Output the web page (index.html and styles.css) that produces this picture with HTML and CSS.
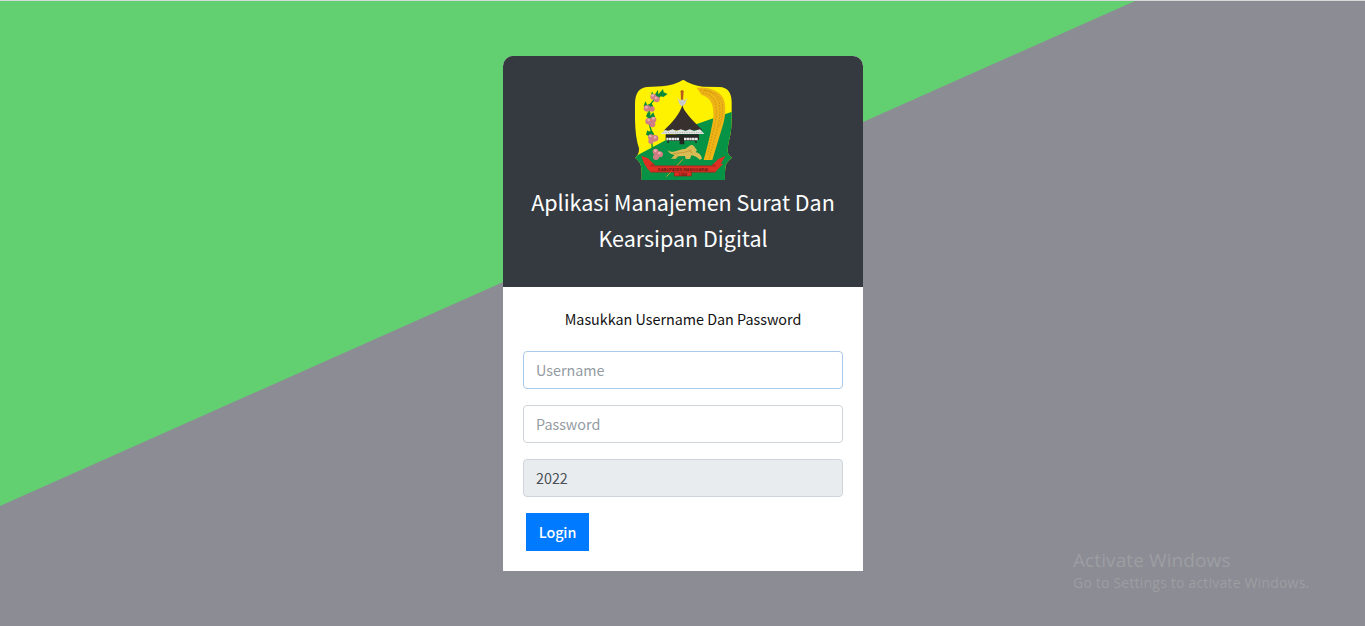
FILE: index.html
```html
<!DOCTYPE html>
<html lang="id">
<head>
<meta charset="utf-8">
<title>Login</title>
<link rel="stylesheet" href="styles.css">
</head>
<body class="login-page">
<main class="card">
  <header class="card-header">
    <svg class="logo" viewBox="30 30 300 300" aria-hidden="true">
      <defs><clipPath id="shield"><path d="M181 29Q204 46 240 50L290 51Q325 53 326 95V128Q327 172 321 200Q314 226 314 243Q315 257 327 263Q317 270 311 280Q305 290 306 330H56Q57 290 51 280Q46 270 36 263Q49 252 48 235Q37 203 36 150V100Q37 54 72 51L117 49Q155 46 181 29Z"/></clipPath></defs>
      <g clip-path="url(#shield)">
        <path fill="#fff200" d="M30 25H330V335H30Z"/>
        <path fill="#079345" d="M30 263L215 164L330 124V335H30Z"/>
      </g>
      <g fill="none" stroke="#078b3b" stroke-width="4"><path d="M125 71Q88 82 80 112Q73 149 84 180L88 237M81 127L76 151M89 190L77 185"/></g>
      <g fill="#078b3b"><path d="M84 76L87 64L93 77L105 59L106 73L120 57L122 67L134 72L121 81L113 79L107 86ZM62 108L67 94L73 105L84 99L91 108L81 119ZM69 139L75 125L81 137L91 127L96 140L82 150ZM69 194L73 181L80 187L86 180L94 193L82 200ZM91 235L97 229L99 241L109 233L104 247Z"/></g>
      <g fill="#d07e85"><circle cx="91" cy="80" r="9"/><circle cx="101" cy="88" r="9"/><circle cx="72" cy="115" r="10"/><circle cx="87" cy="117" r="8"/><circle cx="77" cy="154" r="10"/><circle cx="91" cy="149" r="9"/><circle cx="88" cy="163" r="9"/><circle cx="84" cy="202" r="9"/><circle cx="96" cy="205" r="10"/><circle cx="84" cy="214" r="8"/><circle cx="98" cy="245" r="9"/><circle cx="111" cy="253" r="9"/><circle cx="99" cy="261" r="9"/></g>
      <g fill="#e9b0b0"><circle cx="89" cy="76" r="4"/><circle cx="99" cy="84" r="4"/><circle cx="70" cy="112" r="4"/><circle cx="77" cy="150" r="4"/><circle cx="91" cy="145" r="4"/><circle cx="82" cy="198" r="4"/><circle cx="96" cy="202" r="4"/><circle cx="97" cy="242" r="4"/><circle cx="109" cy="249" r="4"/></g>
      <path fill="#efb516" d="M221 53Q254 51 278 63Q303 75 306 103Q309 137 300 164Q283 220 268 270H242Q258 213 266 172Q276 130 267 103Q260 82 235 74Z"/>
      <path fill="none" stroke="#c48a12" stroke-width="2.5" stroke-dasharray="5 4" d="M232 60Q282 65 289 99Q294 130 286 164L258 267M245 59Q297 72 298 105Q301 138 289 171M239 68Q276 76 279 108Q282 138 275 166L253 254"/>
      <path fill="#cacaca" d="M163 84L172 92L175 87H181L184 92L193 84L187 101L180 108H175L169 101Z"/>
      <path fill="#b75b1d" d="M173 64Q177 56 182 64L180 89H174Z"/>
      <path fill="#37302e" d="M178 106C182 123 203 146 239 181L122 182C148 159 171 130 178 106Z"/>
      <path fill="#dfe1df" d="M126 180L135 183L149 178L160 183L174 178L187 183L200 178L213 183L231 178L244 192H113Z"/>
      <path fill="none" stroke="#8c918d" stroke-width="2" stroke-dasharray="3 4" d="M121 188H239"/>
      <path fill="#242623" d="M128 193H228V210H221V219H217V212H184V223H170V212H137V219H133V210H128Z"/>
      <path fill="none" stroke="#e8e8e8" stroke-width="7" stroke-dasharray="7 1" d="M130 207H168M183 207H225"/>
      <path fill="#d9bc54" d="M132 237Q137 247 151 245L178 238Q189 238 198 229Q207 220 213 229L222 241L218 246Q234 250 237 266L230 269Q220 258 205 256L201 267H188L186 258L166 259L159 266H144L155 255Q138 253 132 237Z"/>
      <path fill="none" stroke="#b88c2d" stroke-width="2" d="M151 251L184 247L206 240M197 241L208 249M158 264L164 257"/>
      <path fill="none" stroke="#ce9b2b" stroke-width="3" d="M130 320Q151 300 179 268"/>
      <g fill="#df3024"><path d="M55 257L75 265L95 285L83 306Q64 290 55 257Z"/><path d="M307 258L286 267L267 286L277 305L301 281L293 282Z"/><path d="M82 287H278V307H82Z"/><path d="M154 305H205V318H154Z"/></g>
      <path fill="none" stroke="#962319" stroke-width="2" d="M83 288H278M83 306H278M82 286L95 281M267 282L278 288M154 306V318H205V306"/>
      <text class="logo-name" x="180" y="302" text-anchor="middle" textLength="151">KABUPATEN MANGGARAI</text>
      <text class="logo-year" x="179" y="317" text-anchor="middle">1958</text>
    </svg>
    <h1 class="title">Aplikasi Manajemen Surat Dan<br>Kearsipan Digital</h1>
  </header>
  <form class="card-body">
    <p class="hint">Masukkan Username Dan Password</p>
    <input class="field field-active" type="text" placeholder="Username">
    <input class="field" type="password" placeholder="Password">
    <input class="field field-readonly" type="text" value="2022" readonly>
    <button class="login" type="button">Login</button>
  </form>
</main>
<aside class="watermark">
  <div class="watermark-title">Activate Windows</div>
  <div class="watermark-text">Go to Settings to activate Windows.</div>
</aside>
</body>
</html>
```
FILE: styles.css
```css
* { box-sizing: border-box; }
.login-page {
  margin: 0;
  height: 626px;
  overflow: hidden;
  display: flex;
  justify-content: center;
  align-items: flex-start;
  padding: 56px 0 0 1px;
  background: #8b8c94;
  font-family: "Noto Sans CJK JP", "Noto Sans", sans-serif;
  font-size: 14.33px;
  position: relative;
  isolation: isolate;
}
.login-page::before {
  content: "";
  position: absolute;
  inset: 0;
  z-index: -1;
  background: #62d070;
  border-top: 1px solid #d5dad9;
  clip-path: polygon(0 0, 100% 0, 100% 1px, 1135px 1px, 0 506px);
}
.card { width: 360px; height: 515px; background: #fff; border-radius: 10px 10px 0 0; }
.card-header {
  height: 231px;
  padding-top: 24px;
  background: #343a40;
  border-radius: 10px 10px 0 0;
  color: #fff;
  text-align: center;
}
.logo { display: block; width: 100px; height: 100px; margin: 0 auto; }
.logo-name { font: bold 12px "Liberation Sans", sans-serif; fill: #641b18; }
.logo-year { font: bold 11px "Liberation Sans", sans-serif; fill: #641b18; }
.title { margin: 4px 0 0; font-size: 21.5px; line-height: 36px; font-weight: 400; }
.card-body { padding: 20px; display: flex; flex-direction: column; }
.hint { margin: 0 0 20px; height: 24px; line-height: 24px; text-align: center; color: #111; }
.field {
  width: 320px;
  height: 38px;
  margin: 0 0 16px;
  padding: 0 12px 2px;
  border: 1px solid #ced4da;
  border-radius: 4px;
  background: #fff;
  color: #495057;
  font: inherit;
  outline: 0;
}
.field::placeholder { color: #939ba2; opacity: 1; }
.field-active { border-color: #abc9ea; }
.field-readonly { background: #e9ecef; }
.login {
  width: 63px;
  height: 38px;
  margin-left: 3px;
  padding: 0 0 2px;
  border: 0;
  background: #007bff;
  color: #fff;
  font: inherit;
  font-weight: 500;
  letter-spacing: -0.1px;
}
.watermark {
  position: absolute;
  left: 1073px;
  top: 547px;
  color: #9d9ea2;
  font-family: "Open Sans", sans-serif;
  white-space: nowrap;
}
.watermark-title { font-size: 19px; line-height: 26px; letter-spacing: 0.1px; }
.watermark-text { font-size: 14px; line-height: 20px; letter-spacing: 0.2px; }
```
